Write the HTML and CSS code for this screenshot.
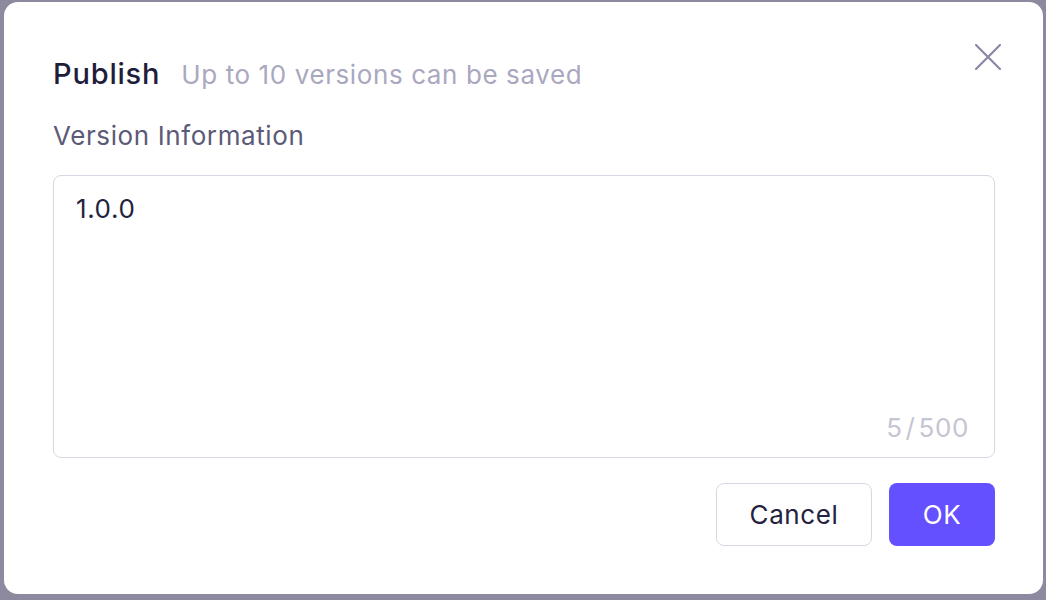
FILE: index.html
```html
<!DOCTYPE html>
<html>
<head>
<meta charset="utf-8">
<link rel="stylesheet" href="styles.css">
</head>
<body>
<div class="dialog">
  <div class="header">
    <span class="title">Publish</span>
    <span class="subtitle">Up to 10 versions can be saved</span>
    <button class="close" aria-label="Close">
      <svg width="26" height="26" viewBox="0 0 26 26"><path d="M1 1 L25 25 M25 1 L1 25" stroke="#8a88a4" stroke-width="2.2" stroke-linecap="round" fill="none"/></svg>
    </button>
  </div>
  <div class="label">Version Information</div>
  <div class="textarea">
    <div class="value">1.0.0</div>
    <div class="counter">5<span class="slash">/</span>500</div>
  </div>
  <div class="footer">
    <button class="btn btn-cancel">Cancel</button>
    <button class="btn btn-ok">OK</button>
  </div>
</div>
</body>
</html>
```
FILE: styles.css
```css
html, body {
  margin: 0;
  padding: 0;
  height: 100%;
}
body {
  background: #8d899f;
  font-family: Inter, "Noto Sans", sans-serif;
  overflow: hidden;
}
.dialog {
  box-sizing: border-box;
  margin: 2px 0 0 4px;
  width: 1039px;
  height: 592px;
  background: #ffffff;
  border-radius: 14px;
  padding: 0 48px 0 49px;
  display: flex;
  flex-direction: column;
}
.header {
  display: flex;
  align-items: baseline;
  padding-top: 54px;
  position: relative;
}
.title {
  font-size: 29px;
  font-weight: 500;
  color: #1f1d3c;
  line-height: 36px;
  letter-spacing: 0.8px;
}
.subtitle {
  font-size: 26px;
  color: #a9a8bf;
  margin-left: 21px;
  line-height: 36px;
  letter-spacing: 0.6px;
}
.close {
  position: absolute;
  right: -6px;
  top: 42px;
  width: 26px;
  height: 26px;
  padding: 0;
  border: 0;
  background: none;
  display: flex;
}
.label {
  margin-top: 27px;
  font-size: 26px;
  color: #5b5a78;
  line-height: 32px;
  letter-spacing: 0.6px;
}
.textarea {
  margin-top: 23px;
  box-sizing: border-box;
  height: 283px;
  border: 1.5px solid #d9d8e2;
  border-radius: 8px;
  padding: 18px 25px 14px 22px;
  display: flex;
  flex-direction: column;
  justify-content: space-between;
}
.value {
  font-size: 26px;
  color: #232240;
  line-height: 30px;
  letter-spacing: 0.6px;
}
.counter {
  align-self: flex-end;
  font-size: 26px;
  color: #c6c5d2;
  line-height: 30px;
  letter-spacing: 0.6px;
}
.slash {
  margin: 0 3px;
}
.footer {
  display: flex;
  justify-content: flex-end;
  gap: 17px;
  margin-top: 25px;
}
.btn {
  height: 63px;
  border-radius: 8px;
  font-family: Inter, "Noto Sans", sans-serif;
  font-size: 26px;
  letter-spacing: 0.6px;
  box-sizing: border-box;
  cursor: pointer;
}
.btn-cancel {
  width: 156px;
  background: #ffffff;
  border: 1.5px solid #d9d8e2;
  color: #232240;
}
.btn-ok {
  width: 106px;
  background: #6450fe;
  border: 0;
  color: #ffffff;
}
```
